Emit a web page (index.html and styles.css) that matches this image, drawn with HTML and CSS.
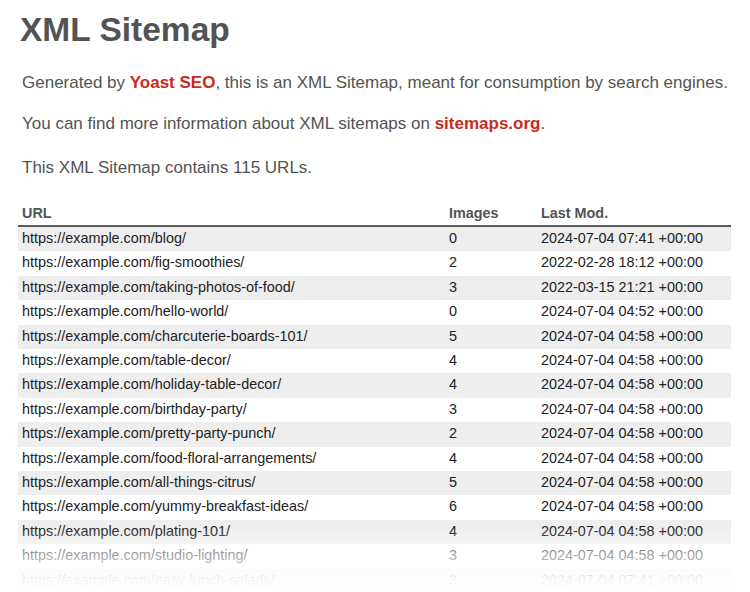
FILE: index.html
```html
<!DOCTYPE html>
<html>
<head>
<meta charset="utf-8">
<link rel="stylesheet" href="styles.css">
</head>
<body>
<div class="page">
  <h1 class="title">XML Sitemap</h1>
  <p class="intro">Generated by <a class="link" href="#">Yoast SEO</a>, this is an XML Sitemap, meant for consumption by search engines.</p>
  <p class="intro">You can find more information about XML sitemaps on <a class="link" href="#">sitemaps.org</a>.</p>
  <p class="intro count">This XML Sitemap contains 115 URLs.</p>
  <table class="sitemap">
    <thead>
      <tr><th class="c-url">URL</th><th class="c-img">Images</th><th class="c-mod">Last Mod.</th></tr>
    </thead>
    <tbody>
      <tr><td>https://example.com/blog/</td><td>0</td><td>2024-07-04 07:41 +00:00</td></tr>
      <tr><td>https://example.com/fig-smoothies/</td><td>2</td><td>2022-02-28 18:12 +00:00</td></tr>
      <tr><td>https://example.com/taking-photos-of-food/</td><td>3</td><td>2022-03-15 21:21 +00:00</td></tr>
      <tr><td>https://example.com/hello-world/</td><td>0</td><td>2024-07-04 04:52 +00:00</td></tr>
      <tr><td>https://example.com/charcuterie-boards-101/</td><td>5</td><td>2024-07-04 04:58 +00:00</td></tr>
      <tr><td>https://example.com/table-decor/</td><td>4</td><td>2024-07-04 04:58 +00:00</td></tr>
      <tr><td>https://example.com/holiday-table-decor/</td><td>4</td><td>2024-07-04 04:58 +00:00</td></tr>
      <tr><td>https://example.com/birthday-party/</td><td>3</td><td>2024-07-04 04:58 +00:00</td></tr>
      <tr><td>https://example.com/pretty-party-punch/</td><td>2</td><td>2024-07-04 04:58 +00:00</td></tr>
      <tr><td>https://example.com/food-floral-arrangements/</td><td>4</td><td>2024-07-04 04:58 +00:00</td></tr>
      <tr><td>https://example.com/all-things-citrus/</td><td>5</td><td>2024-07-04 04:58 +00:00</td></tr>
      <tr><td>https://example.com/yummy-breakfast-ideas/</td><td>6</td><td>2024-07-04 04:58 +00:00</td></tr>
      <tr><td>https://example.com/plating-101/</td><td>4</td><td>2024-07-04 04:58 +00:00</td></tr>
      <tr><td>https://example.com/studio-lighting/</td><td>3</td><td>2024-07-04 04:58 +00:00</td></tr>
      <tr><td>https://example.com/easy-lunch-salads/</td><td>3</td><td>2024-07-04 07:41 +00:00</td></tr>
    </tbody>
  </table>
  <div class="fade"></div>
</div>
</body>
</html>
```
FILE: styles.css
```css
html, body {
  margin: 0;
  padding: 0;
  background: #fff;
  overflow: hidden;
}
.page {
  position: relative;
  height: 592px;
  overflow: hidden;
  padding: 0 19px 0 18px;
  font-family: "Liberation Sans", Arial, sans-serif;
  color: #545353;
}
.title {
  margin: 0;
  padding: 10px 0 0 2px;
  font-size: 33.5px;
  line-height: 40px;
  font-weight: bold;
  color: #545353;
}
.intro {
  margin: 0;
  padding-left: 4px;
  font-size: 17px;
  line-height: 20px;
  margin-top: 21px;
}
.intro:first-of-type {
  margin-top: 23px;
}
.intro.count {
  margin-top: 24px;
}
.link {
  color: #cc2a1a;
  font-weight: bold;
  text-decoration: none;
}
.sitemap {
  margin-top: 23px;
  width: 100%;
  border-collapse: collapse;
  font-size: 14.4px;
  color: #222;
}
.sitemap th {
  text-align: left;
  font-weight: bold;
  color: #545353;
  padding: 4px 4px 3px 4px;
  line-height: 17px;
  border-bottom: 2px solid #5a5a5a;
}
.sitemap td {
  padding: 3px 4px 4px 4px;
  line-height: 17.4px;
  white-space: nowrap;
}
.sitemap tbody tr:nth-child(odd) td {
  background: #eee;
}
.c-url { width: 419px; }
.c-img { width: 84px; }
.fade {
  position: absolute;
  left: 0;
  right: 0;
  bottom: 0;
  height: 64px;
  background: linear-gradient(to bottom, rgba(255,255,255,0) 0%, rgba(255,255,255,0.55) 40%, rgba(255,255,255,0.95) 80%, #fff 100%);
}
```
